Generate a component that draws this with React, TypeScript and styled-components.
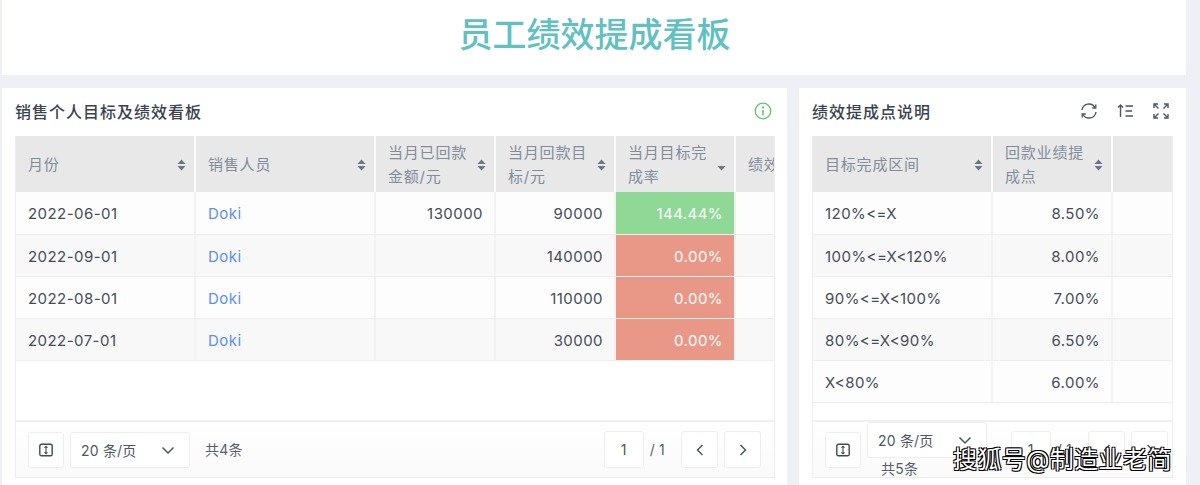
import React from "react";
import styled, { createGlobalStyle } from "styled-components";

const Global = createGlobalStyle`
  html, body { margin: 0; padding: 0; height: 485px; overflow: hidden; background: #eef0f6; }
  * { box-sizing: border-box; }
  body { font-family: Inter, "Noto Sans CJK SC", sans-serif; }
`;

const Page = styled.div`
  position: relative;
  width: 1200px;
  height: 485px;
  overflow: hidden;
  padding: 0 14px 0 2px;
  display: flex;
  flex-direction: column;
  gap: 13px;
`;
const TitleCard = styled.header`
  height: 75px;
  flex: none;
  background: #fff;
  display: flex;
  align-items: center;
  justify-content: center;
`;
const Title = styled.h1`
  margin: 0 0 5px 1px;
  font-size: 34px;
  font-weight: 500;
  color: #5fc1c2;
  line-height: 1;
`;
const Panels = styled.div`
  display: flex;
  gap: 12px;
  flex: none;
  height: 410px;
`;
const Panel = styled.section<{ $w: number; $pad: number }>`
  width: ${(p) => p.$w}px;
  flex: none;
  background: #fff;
  padding: 0 ${(p) => p.$pad}px 0 13px;
  display: flex;
  flex-direction: column;
`;
const PanelHead = styled.div`
  height: 48px;
  flex: none;
  padding-bottom: 2px;
  display: flex;
  align-items: center;
  justify-content: space-between;
`;
const PanelTitle = styled.h2`
  margin: 0;
  font-size: 16px;
  font-weight: 500;
  letter-spacing: 1px;
  color: #3a4250;
`;
const Tools = styled.div<{ $end: number }>`
  display: flex;
  align-items: center;
  gap: 19px;
  padding-right: ${(p) => p.$end}px;
  color: #4b5563;
`;
const Frame = styled.div`
  height: 342px;
  border: 1px solid #eeeeef;
  border-top: none;
  display: flex;
  flex-direction: column;
  overflow: hidden;
`;
const Row = styled.div<{ $cols: string; $alt?: boolean; $h: number }>`
  display: grid;
  grid-template-columns: ${(p) => p.$cols};
  height: ${(p) => p.$h}px;
  flex: none;
  background: ${(p) => (p.$alt ? "#f8f8f9" : "#fdfdfd")};
  border-bottom: 1px solid #eeeeef;
`;
const HeadRow = styled.div<{ $cols: string }>`
  display: grid;
  grid-template-columns: ${(p) => p.$cols};
  height: 56px;
  flex: none;
  background: #e8e8e9;
`;
const HeadCell = styled.div`
  display: flex;
  align-items: center;
  justify-content: space-between;
  padding: 1px 8px 0 12px;
  border-right: 2px solid #fbfbfb;
  font-size: 15px;
  letter-spacing: 0.8px;
  line-height: 24px;
  color: #828c9b;
  white-space: pre-line;
  overflow: hidden;
  &:last-child { border-right: none; }
`;
const CutLabel = styled.span`
  white-space: nowrap;
`;
const Cell = styled.div<{ $right?: boolean; $fill?: string; $link?: boolean }>`
  display: flex;
  align-items: center;
  justify-content: ${(p) => (p.$right ? "flex-end" : "flex-start")};
  padding: 1px 11px 0 12px;
  border-right: 2px solid #f2f2f3;
  font-size: 15px;
  letter-spacing: 0.45px;
  color: ${(p) => (p.$fill ? "#fff" : p.$link ? "#5b8ff0" : "#454c59")};
  background: ${(p) => p.$fill ?? "transparent"};
  &:last-child { border-right: none; }
`;
const Spacer = styled.div`
  flex: 1;
  border-bottom: 2px solid #f0f0f1;
`;
const Foot = styled.div<{ $end: number }>`
  height: 55px;
  flex: none;
  display: flex;
  align-items: center;
  justify-content: space-between;
  padding: 0 ${(p) => p.$end}px 0 12px;
  background: linear-gradient(#fff, #fafafa);
`;
const FootSide = styled.div`
  display: flex;
  align-items: center;
  gap: 6px;
`;
const Box = styled.button<{ $w: number; $h?: number }>`
  width: ${(p) => p.$w}px;
  height: ${(p) => p.$h ?? 37}px;
  flex: none;
  padding: 0;
  display: flex;
  align-items: center;
  justify-content: center;
  background: #fff;
  border: 1px solid #eeeeef;
  border-radius: 3px;
  color: #4b5563;
  font: inherit;
  font-size: 14px;
`;
const Select = styled(Box)`
  justify-content: space-between;
  padding: 0 14px 0 10px;
  letter-spacing: 0.2px;
  color: #4f5663;
`;
const Muted = styled.span<{ $ml?: number }>`
  font-size: 14px;
  line-height: 17px;
  color: #585f6c;
  letter-spacing: 0.2px;
  margin-left: ${(p) => p.$ml ?? 0}px;
`;
const PagerGap = styled.span`
  width: 4px;
`;
const WrapStack = styled.div`
  display: flex;
  flex-direction: column;
  align-items: flex-start;
  margin-top: -1px;
  gap: 2px;
`;
const Watermark = styled.div`
  position: absolute;
  left: 953px;
  top: 444px;
  font-size: 24px;
  line-height: 32px;
  color: #fff;
  letter-spacing: 0.4px;
  white-space: nowrap;
  text-shadow: 1px 1px 0 #000, -1px 1px 0 #000, 1px -1px 0 #000, -1px -1px 0 #000;
`;

const Sort = ({ active }: { active?: boolean }) => (
  <svg width="9" height="12" viewBox="0 0 9 12" style={{ flex: "none" }}>
    {!active && <path d="M4.5 0.5 8.5 5H.5z" fill="#6b7585" />}
    <path d="M.5 7h8l-4 4.5z" fill="#6b7585" />
  </svg>
);
const Info = () => (
  <svg width="18" height="18" viewBox="0 0 18 18" fill="none" stroke="#62c66e" strokeWidth="1.3">
    <circle cx="9" cy="9" r="7.8" />
    <path d="M9 8v5.4" strokeWidth="1.5" />
    <circle cx="9" cy="5.4" r=".5" fill="#62c66e" />
  </svg>
);
const Refresh = () => (
  <svg width="18" height="18" viewBox="0 0 18 18" fill="none" stroke="currentColor" strokeWidth="1.4">
    <path d="M2 8a7 7 0 0 1 13-2.5M16 10a7 7 0 0 1-13 2.5" />
    <path d="M15.8 2.4v3.6h-3.6M2.2 15.6V12h3.6" strokeWidth="1.3" />
  </svg>
);
const SortList = () => (
  <svg width="17" height="16" viewBox="0 0 17 16" fill="none" stroke="currentColor" strokeWidth="1.4">
    <path d="M3.5 14V2M1 4.5 3.5 2 6 4.5M8.5 3H16M8.5 8H15M8.5 13H16" />
  </svg>
);
const Expand = () => (
  <svg width="16" height="16" viewBox="0 0 16 16" fill="none" stroke="currentColor" strokeWidth="1.4">
    <path d="M1 5V1h4M11 1h4v4M1 11v4h4M15 11v4h-4M2 2l3.5 3.5M14 2l-3.5 3.5M2 14l3.5-3.5M14 14l-3.5-3.5" />
  </svg>
);
const RowHeight = () => (
  <svg width="14" height="14" viewBox="0 0 14 14" fill="none" stroke="#414a59" strokeWidth="1.4">
    <rect x=".8" y="1.2" width="12.4" height="11.6" rx="1.6" />
    <path d="M7 3.5v7M5.5 4.6 7 3.2l1.5 1.4M5.5 9.4 7 10.8l1.5-1.4" strokeWidth="1.1" />
  </svg>
);
const Chevron = ({ d }: { d: string }) => (
  <svg width="14" height="14" viewBox="0 0 14 14" fill="none" stroke="#4b5563" strokeWidth="1.5">
    <path d={d} />
  </svg>
);
const DOWN = "M1.5 4.5 7 10l5.5-5.5";
const LEFT = "M9.5 2 4.5 7l5 5";
const RIGHT = "M4.5 2l5 5-5 5";

const leftCols = "180px 180px 120px 120px 120px 1fr";
const rightCols = "180px 120px 1fr";
const sales = [
  ["2022-06-01", "130000", "90000", "144.44%", "#90d896"],
  ["2022-09-01", "", "140000", "0.00%", "#e99888"],
  ["2022-08-01", "", "110000", "0.00%", "#e99888"],
  ["2022-07-01", "", "30000", "0.00%", "#e99888"],
];
const points = [
  ["120%<=X", "8.50%"],
  ["100%<=X<120%", "8.00%"],
  ["90%<=X<100%", "7.00%"],
  ["80%<=X<90%", "6.50%"],
  ["X<80%", "6.00%"],
];

const Pager = () => (
  <FootSide>
    <Box $w={40}>1</Box>
    <Muted>/ 1</Muted>
    <PagerGap />
    <Box $w={37}><Chevron d={LEFT} /></Box>
    <Box $w={37}><Chevron d={RIGHT} /></Box>
  </FootSide>
);

export default function App() {
  return (
    <Page>
      <Global />
      <TitleCard>
        <Title>员工绩效提成看板</Title>
      </TitleCard>
      <Panels>
        <Panel $w={785} $pad={12}>
          <PanelHead>
            <PanelTitle>销售个人目标及绩效看板</PanelTitle>
            <Tools $end={3}><Info /></Tools>
          </PanelHead>
          <Frame>
            <HeadRow $cols={leftCols}>
              <HeadCell>月份<Sort /></HeadCell>
              <HeadCell>销售人员<Sort /></HeadCell>
              <HeadCell>{"当月已回款\n金额/元"}<Sort /></HeadCell>
              <HeadCell>{"当月回款目\n标/元"}<Sort /></HeadCell>
              <HeadCell>{"当月目标完\n成率"}<Sort active /></HeadCell>
              <HeadCell><CutLabel>绩效提成</CutLabel></HeadCell>
            </HeadRow>
            {sales.map((r, i) => (
              <Row key={r[0]} $cols={leftCols} $alt={i % 2 === 1} $h={i === 0 ? 43 : 42}>
                <Cell>{r[0]}</Cell>
                <Cell $link>Doki</Cell>
                <Cell $right>{r[1]}</Cell>
                <Cell $right>{r[2]}</Cell>
                <Cell $right $fill={r[4]}>{r[3]}</Cell>
                <Cell />
              </Row>
            ))}
            <Spacer />
            <Foot $end={13}>
              <FootSide>
                <Box $w={36} $h={36}><RowHeight /></Box>
                <Select $w={120} $h={36}>20 条/页<Chevron d={DOWN} /></Select>
                <Muted $ml={9}>共4条</Muted>
              </FootSide>
              <Pager />
            </Foot>
          </Frame>
        </Panel>
        <Panel $w={387} $pad={13}>
          <PanelHead>
            <PanelTitle>绩效提成点说明</PanelTitle>
            <Tools $end={4}><Refresh /><SortList /><Expand /></Tools>
          </PanelHead>
          <Frame>
            <HeadRow $cols={rightCols}>
              <HeadCell>目标完成区间<Sort /></HeadCell>
              <HeadCell>{"回款业绩提\n成点"}<Sort /></HeadCell>
              <HeadCell />
            </HeadRow>
            {points.map((r, i) => (
              <Row key={r[0]} $cols={rightCols} $alt={i % 2 === 1} $h={i === 0 ? 43 : 42}>
                <Cell>{r[0]}</Cell>
                <Cell $right>{r[1]}</Cell>
                <Cell />
              </Row>
            ))}
            <Spacer />
            <Foot $end={4}>
              <FootSide>
                <Box $w={36} $h={36}><RowHeight /></Box>
                <WrapStack>
                  <Select $w={120} $h={36}>20 条/页<Chevron d={DOWN} /></Select>
                  <Muted $ml={14}>共5条</Muted>
                </WrapStack>
              </FootSide>
              <Pager />
            </Foot>
          </Frame>
        </Panel>
      </Panels>
      <Watermark>搜狐号@制造业老简</Watermark>
    </Page>
  );
}
